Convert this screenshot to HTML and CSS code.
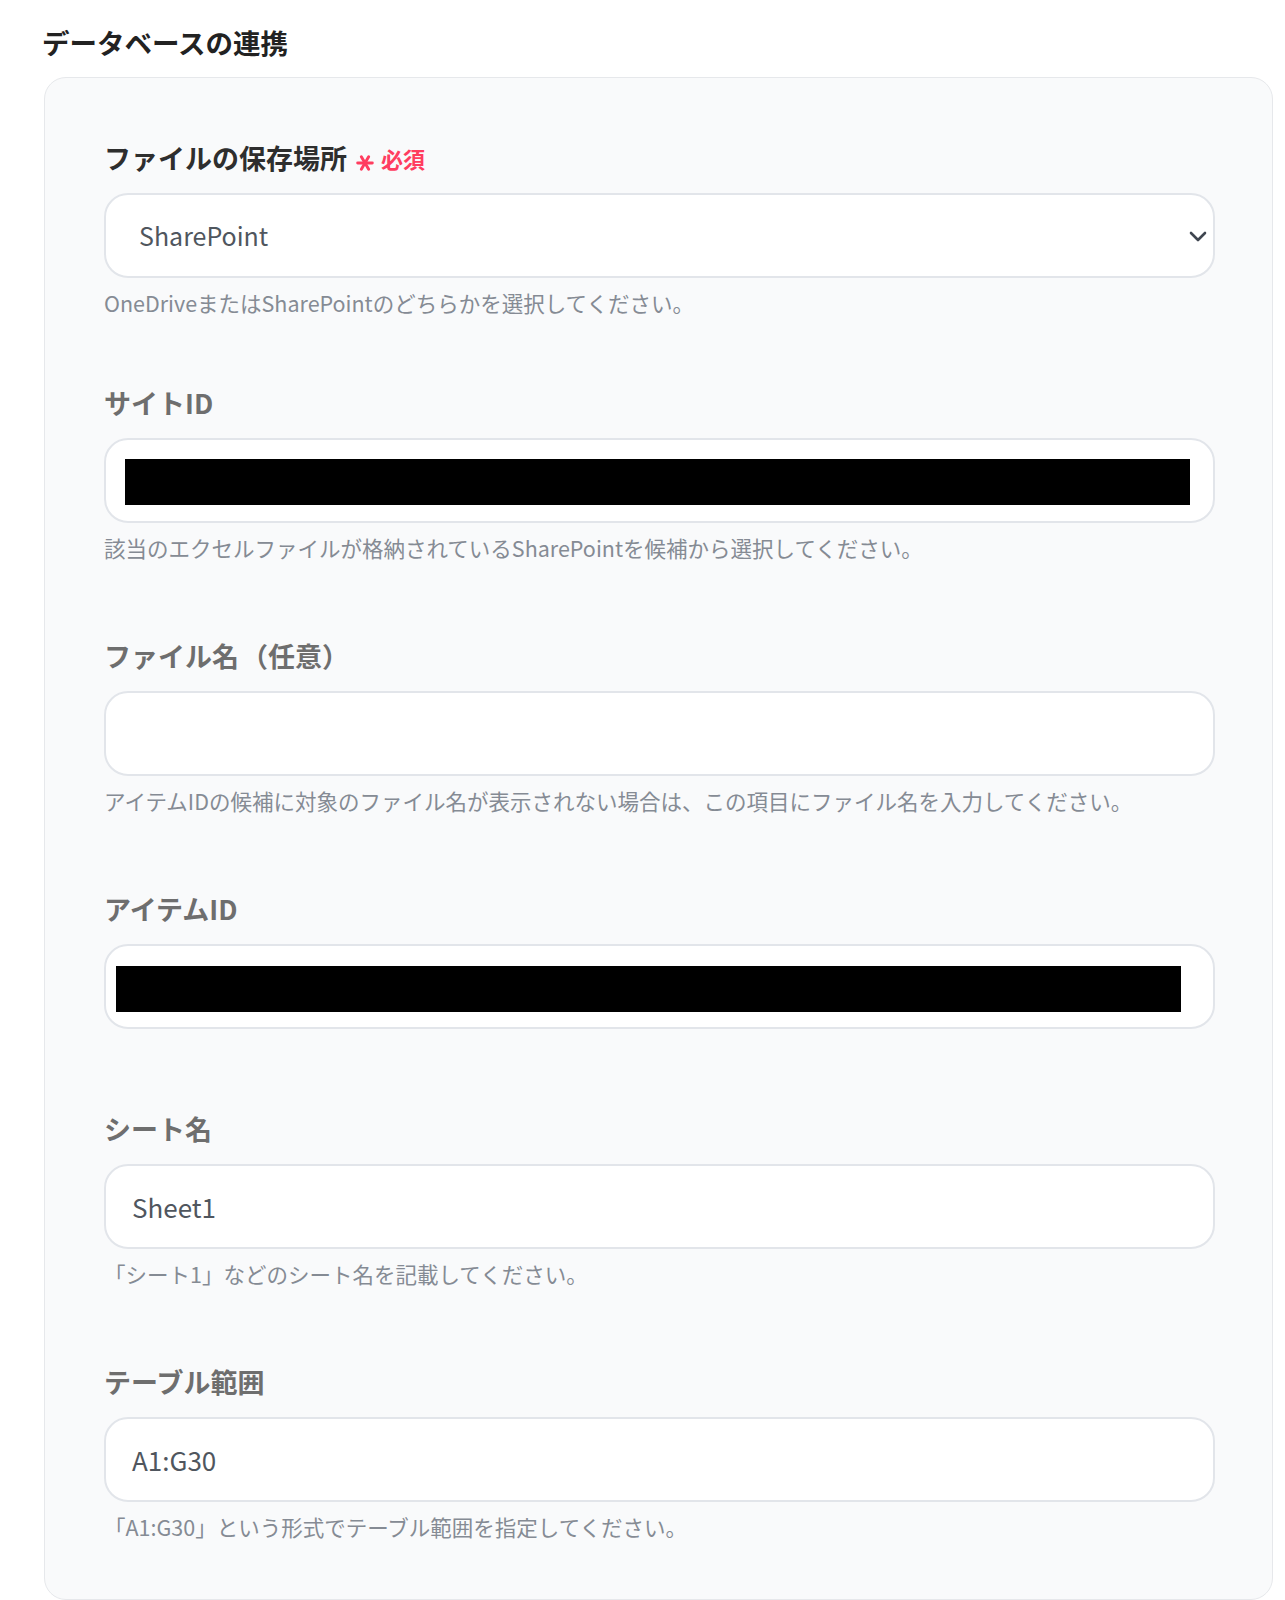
FILE: index.html
```html
<!DOCTYPE html>
<html lang="ja">
<head>
<meta charset="utf-8">
<title>データベースの連携</title>
<link rel="stylesheet" href="styles.css">
</head>
<body>
<main class="page">
  <h2 class="section-title">データベースの連携</h2>
  <section class="card">
    <div class="field field-first">
      <div class="label label-strong">ファイルの保存場所<span class="required"><svg class="asterisk" width="18" height="18" viewBox="0 0 16 16" aria-hidden="true"><g stroke="#ff3d5f" stroke-width="2.6" stroke-linecap="round"><path d="M1.5 8 H14.5"/><path d="M4.75 2.4 L11.25 13.6"/><path d="M11.25 2.4 L4.75 13.6"/></g></svg>必須</span></div>
      <div class="control control-select">
        <span class="value value-select">SharePoint</span>
        <svg class="chevron" width="18" height="11" viewBox="0 0 18 11" aria-hidden="true"><path d="M2 2 L9 9 L16 2" fill="none" stroke="#3f4650" stroke-width="2.6" stroke-linecap="round" stroke-linejoin="round"/></svg>
      </div>
      <p class="help">OneDriveまたはSharePointのどちらかを選択してください。</p>
    </div>

    <div class="field">
      <div class="label">サイトID</div>
      <div class="control control-redacted">
        <div class="redact redact-site"></div>
      </div>
      <p class="help">該当のエクセルファイルが格納されているSharePointを候補から選択してください。</p>
    </div>

    <div class="field">
      <div class="label">ファイル名<span class="paren">（任意）</span></div>
      <div class="control"></div>
      <p class="help">アイテムIDの候補に対象のファイル名が表示されない場合は、この項目にファイル名を入力してください。</p>
    </div>

    <div class="field">
      <div class="label">アイテムID</div>
      <div class="control control-redacted">
        <div class="redact redact-item"></div>
      </div>
    </div>

    <div class="field">
      <div class="label">シート名</div>
      <div class="control"><span class="value">Sheet1</span></div>
      <p class="help">「シート1」などのシート名を記載してください。</p>
    </div>

    <div class="field field-last">
      <div class="label">テーブル範囲</div>
      <div class="control"><span class="value">A1:G30</span></div>
      <p class="help">「A1:G30」という形式でテーブル範囲を指定してください。</p>
    </div>
  </section>
</main>
</body>
</html>
```

FILE: styles.css
```css
* {
  box-sizing: border-box;
}

html, body {
  margin: 0;
  padding: 0;
  background: #ffffff;
}

body {
  font-family: "Noto Sans CJK JP", "Noto Sans", sans-serif;
  color: #333333;
}

.page {
  padding: 22px 12px 0 44px;
}

.section-title {
  margin: 0 0 15px -2px;
  font-size: 27.5px;
  line-height: 40px;
  font-weight: 700;
  color: #222222;
}

.card {
  background: #f9fafb;
  border: 1px solid #e6e8eb;
  border-radius: 22px;
  padding: 60px 57px 64px 59px;
  display: flex;
  flex-direction: column;
}

.field {
  display: flex;
  flex-direction: column;
  margin-bottom: 80px;
}

.field-first {
  margin-bottom: 72px;
}

.field-last {
  margin-bottom: 0;
}

.label {
  font-size: 27px;
  line-height: 40px;
  font-weight: 700;
  color: #6e6e6e;
  margin-bottom: 15px;
  display: flex;
  align-items: center;
}

.label-strong {
  color: #2e2e2e;
}

.paren {
  margin-left: 2px;
}

.required {
  display: inline-flex;
  align-items: center;
  margin-left: 9px;
  font-size: 22px;
  font-weight: 700;
  color: #ff3d5f;
}

.asterisk {
  flex: none;
  margin-right: 7px;
  transform: translateY(5px);
}

.control {
  height: 85px;
  background: #ffffff;
  border: 2px solid #e2e5ea;
  border-radius: 24px;
  display: flex;
  align-items: center;
  padding: 0 26px;
}

.control-select {
  padding: 0 6px 0 33px;
  justify-content: space-between;
}

.control-redacted {
  padding: 0;
}

.value {
  font-size: 26px;
  line-height: 1;
  color: #50565e;
}

.value-select {
  font-size: 25px;
}

.chevron {
  flex: none;
  margin-top: 2px;
}

.redact {
  height: 46px;
  background: #000000;
  width: 1065px;
}

.redact-site {
  margin-left: 19px;
  margin-top: 2px;
}

.redact-item {
  margin-left: 10px;
  margin-top: 4px;
}

.help {
  margin: 10px 0 -7px 0;
  font-size: 21.5px;
  line-height: 30px;
  color: #858b94;
}
```
